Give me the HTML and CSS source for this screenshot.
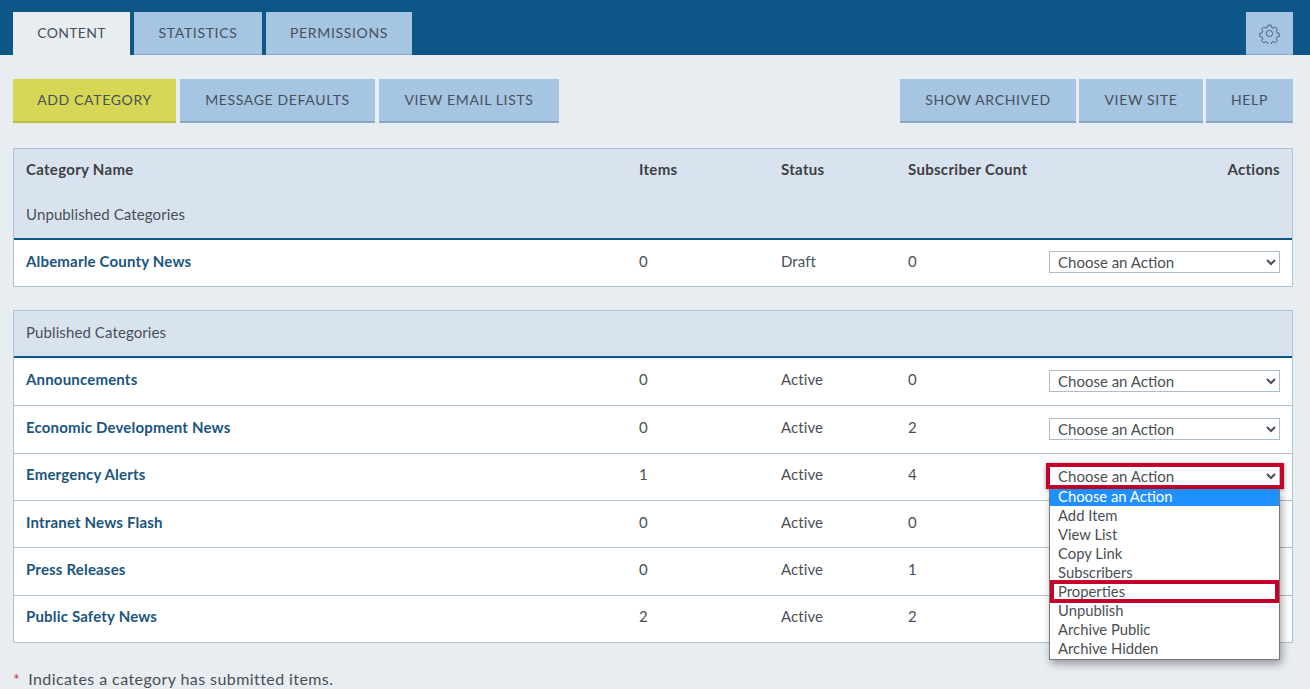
FILE: index.html
```html
<!DOCTYPE html>
<html lang="en">
<head>
    <meta charset="UTF-8">
    <meta name="viewport" content="width=device-width, initial-scale=1.0">
    <link rel="stylesheet" href="styles.css">
    <title>Notify Me</title>
</head>
<body>
<div class="topbar">
    <div class="tab active">Content</div>
    <div class="tab tab-stats">Statistics</div>
    <div class="tab tab-perms">Permissions</div>
    <div class="gear">
        <svg width="21" height="21" viewBox="0 0 24 24" fill="none" stroke="#46525e" stroke-width="1" stroke-linejoin="round">
            <circle cx="12" cy="12" r="3.6"/>
            <path d="M10.2 2.5h3.6l.6 2.6 1.9.8 2.3-1.4 2.5 2.5-1.4 2.3.8 1.9 2.6.6v3.6l-2.6.6-.8 1.9 1.4 2.3-2.5 2.5-2.3-1.4-1.9.8-.6 2.6h-3.6l-.6-2.6-1.9-.8-2.3 1.4-2.5-2.5 1.4-2.3-.8-1.9-2.6-.6v-3.6l2.6-.6.8-1.9-1.4-2.3 2.5-2.5 2.3 1.4 1.9-.8z"/>
        </svg>
    </div>
</div>

<div class="toolbar">
    <div class="btn btn-add">Add Category</div>
    <div class="btn btn-defaults">Message Defaults</div>
    <div class="btn btn-lists">View Email Lists</div>
    <div class="spacer"></div>
    <div class="btn btn-archived">Show Archived</div>
    <div class="btn btn-site">View Site</div>
    <div class="btn btn-help">Help</div>
</div>

<div class="panel">
    <div class="panel-head">
        <div class="row-grid col-titles">
            <div>Category Name</div>
            <div>Items</div>
            <div>Status</div>
            <div>Subscriber Count</div>
            <div class="right">Actions</div>
        </div>
        <div class="group-title">Unpublished Categories</div>
    </div>
    <div class="row-grid row row-first">
        <a class="name">Albemarle County News</a>
        <div>0</div>
        <div>Draft</div>
        <div>0</div>
        <div class="right"><select class="action"><option>Choose an Action</option></select></div>
    </div>
</div>

<div class="panel panel-published">
    <div class="panel-head">
        <div class="group-title group-only">Published Categories</div>
    </div>
    <div class="row-grid row">
        <a class="name">Announcements</a>
        <div>0</div>
        <div>Active</div>
        <div>0</div>
        <div class="right"><select class="action"><option>Choose an Action</option></select></div>
    </div>
    <div class="row-grid row">
        <a class="name">Economic Development News</a>
        <div>0</div>
        <div>Active</div>
        <div>2</div>
        <div class="right"><select class="action"><option>Choose an Action</option></select></div>
    </div>
    <div class="row-grid row">
        <a class="name">Emergency Alerts</a>
        <div>1</div>
        <div>Active</div>
        <div>4</div>
        <div class="right action-open">
            <select class="action"><option>Choose an Action</option></select>
            <div class="callout-select"></div>
            <div class="dropdown">
                <div class="option selected">Choose an Action</div>
                <div class="option">Add Item</div>
                <div class="option">View List</div>
                <div class="option">Copy Link</div>
                <div class="option">Subscribers</div>
                <div class="option callout-option">Properties</div>
                <div class="option">Unpublish</div>
                <div class="option">Archive Public</div>
                <div class="option">Archive Hidden</div>
            </div>
        </div>
    </div>
    <div class="row-grid row">
        <a class="name">Intranet News Flash</a>
        <div>0</div>
        <div>Active</div>
        <div>0</div>
        <div></div>
    </div>
    <div class="row-grid row">
        <a class="name">Press Releases</a>
        <div>0</div>
        <div>Active</div>
        <div>1</div>
        <div></div>
    </div>
    <div class="row-grid row">
        <a class="name">Public Safety News</a>
        <div>2</div>
        <div>Active</div>
        <div>2</div>
        <div></div>
    </div>
</div>

<p class="note"><span class="star">*</span>Indicates a category has submitted items.</p>
</body>
</html>
```

FILE: styles.css
```css
* {
    box-sizing: border-box;
}

html, body {
    height: 689px;
    overflow: hidden;
}

body {
    margin: 0;
    background-color: #e8edf2;
    font-family: "Lato", "Liberation Sans", sans-serif;
    font-size: 15px;
    letter-spacing: 0.1px;
    color: #4a4f55;
}

.topbar {
    display: flex;
    align-items: flex-end;
    gap: 4px;
    height: 55px;
    padding: 0 17px 0 13px;
    background-color: #0c5688;
}

.tab {
    display: flex;
    align-items: center;
    justify-content: center;
    height: 43px;
    width: 128px;
    padding-bottom: 2px;
    background-color: #a6c5e3;
    border-bottom: 1px solid #8fa9c8;
    font-size: 14px;
    letter-spacing: 0.65px;
    text-transform: uppercase;
    color: #47505a;
}

.tab.active {
    width: 117px;
    background-color: #e8edf2;
    border-bottom: none;
    letter-spacing: 0.3px;
}

.tab-perms {
    width: 146px;
}

.gear {
    display: flex;
    align-items: center;
    justify-content: center;
    width: 47px;
    height: 43px;
    margin-left: auto;
    background-color: #a6c5e3;
    border-bottom: 1px solid #8fa9c8;
}

.toolbar {
    display: flex;
    gap: 4px;
    margin: 24px 17px 0 13px;
}

.spacer {
    flex: 1;
}

.btn {
    display: flex;
    align-items: center;
    justify-content: center;
    height: 44px;
    padding-bottom: 1px;
    background-color: #a6c5e3;
    border-bottom: 2px solid #8aa6c6;
    font-size: 14px;
    letter-spacing: 0.65px;
    text-transform: uppercase;
    color: #47505a;
}

.btn-add {
    width: 163px;
    background-color: #d5d755;
    border-bottom-color: #bcbe3e;
}

.btn-defaults {
    width: 195px;
}

.btn-lists {
    width: 180px;
}

.btn-archived {
    width: 176px;
    margin-right: -1px;
}

.btn-site {
    width: 124px;
    margin-right: -1px;
}

.btn-help {
    width: 87px;
}

.panel {
    margin: 25px 17px 0 13px;
    background-color: #fff;
    border: 1px solid #b0c1d6;
}

.panel-published {
    margin-top: 23px;
}

.panel-head {
    background-color: #d9e3ef;
    border-bottom: 2px solid #0c5688;
}

.row-grid {
    display: grid;
    grid-template-columns: 613px 142px 127px minmax(0, 1fr) 260px;
    align-items: center;
    padding: 0 12px;
}

.col-titles {
    height: 40px;
    font-weight: 700;
    letter-spacing: 0.3px;
    color: #3c4043;
    white-space: nowrap;
}

.group-title {
    height: 49px;
    padding: 16px 12px 0;
    color: #4a4f55;
}

.group-only {
    height: 45px;
    padding-top: 12px;
}

.row {
    height: 47.33px;
    padding-bottom: 2px;
    border-top: 1px solid #b0c1d6;
}

.row:nth-child(2) {
    border-top: none;
}

.row > :not(.right) {
    padding-bottom: 3px;
}

.row-first {
    height: 46px;
}

.name {
    font-weight: 700;
    letter-spacing: 0.18px;
    color: #1b5480;
}

.right {
    text-align: right;
}

.action {
    width: 231px;
    height: 22px;
    padding: 0 4px;
    background-color: #fff;
    border: 1px solid #aebccb;
    border-radius: 0;
    font-family: inherit;
    font-size: 15px;
    color: #4a4f55;
    vertical-align: middle;
}

.action-open {
    position: relative;
}

.callout-select {
    position: absolute;
    top: -2px;
    right: -4px;
    width: 238px;
    height: 26px;
    border: 4px solid #c5002b;
    box-shadow: 0 1px 4px rgba(0, 0, 0, 0.45);
}

.dropdown {
    position: absolute;
    z-index: 2;
    top: 24px;
    right: 0;
    width: 231px;
    padding-bottom: 1px;
    background-color: #fff;
    border: 1px solid #777;
    border-top: none;
    box-shadow: 2px 4px 8px rgba(0, 0, 0, 0.35);
    text-align: left;
}

.option {
    position: relative;
    height: 19px;
    padding-left: 8px;
    line-height: 19px;
    font-size: 14.8px;
    letter-spacing: 0;
    color: #4a4f55;
}

.option.selected {
    height: 17px;
    line-height: 15px;
    background-color: #1e90ff;
    color: #fff;
}

.callout-option::after {
    content: "";
    position: absolute;
    top: -2px;
    bottom: -2px;
    left: 0;
    right: 0;
    border: 4px solid #c5002b;
}

.note {
    margin: 26px 0 0 13px;
    font-size: 16px;
    letter-spacing: 0.42px;
    color: #4a4f55;
}

.star {
    margin-right: 8px;
    color: #c0395e;
}
```
